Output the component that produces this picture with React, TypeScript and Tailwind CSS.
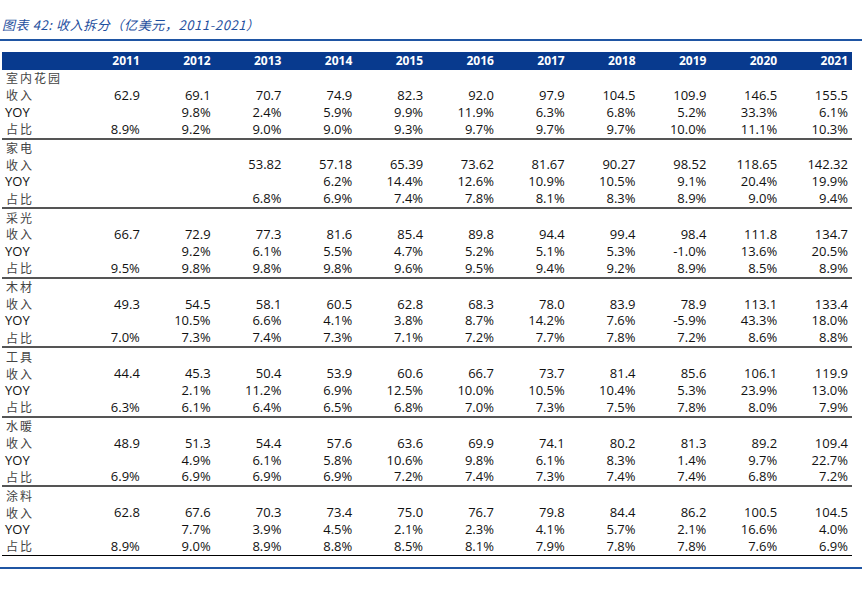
const years = ["2011", "2012", "2013", "2014", "2015", "2016", "2017", "2018", "2019", "2020", "2021"];

type Group = { name: string; rev: string[]; yoy: string[]; share: string[] };

const groups: Group[] = [
  {
    name: "室内花园",
    rev: ["62.9", "69.1", "70.7", "74.9", "82.3", "92.0", "97.9", "104.5", "109.9", "146.5", "155.5"],
    yoy: ["", "9.8%", "2.4%", "5.9%", "9.9%", "11.9%", "6.3%", "6.8%", "5.2%", "33.3%", "6.1%"],
    share: ["8.9%", "9.2%", "9.0%", "9.0%", "9.3%", "9.7%", "9.7%", "9.7%", "10.0%", "11.1%", "10.3%"],
  },
  {
    name: "家电",
    rev: ["", "", "53.82", "57.18", "65.39", "73.62", "81.67", "90.27", "98.52", "118.65", "142.32"],
    yoy: ["", "", "", "6.2%", "14.4%", "12.6%", "10.9%", "10.5%", "9.1%", "20.4%", "19.9%"],
    share: ["", "", "6.8%", "6.9%", "7.4%", "7.8%", "8.1%", "8.3%", "8.9%", "9.0%", "9.4%"],
  },
  {
    name: "采光",
    rev: ["66.7", "72.9", "77.3", "81.6", "85.4", "89.8", "94.4", "99.4", "98.4", "111.8", "134.7"],
    yoy: ["", "9.2%", "6.1%", "5.5%", "4.7%", "5.2%", "5.1%", "5.3%", "-1.0%", "13.6%", "20.5%"],
    share: ["9.5%", "9.8%", "9.8%", "9.8%", "9.6%", "9.5%", "9.4%", "9.2%", "8.9%", "8.5%", "8.9%"],
  },
  {
    name: "木材",
    rev: ["49.3", "54.5", "58.1", "60.5", "62.8", "68.3", "78.0", "83.9", "78.9", "113.1", "133.4"],
    yoy: ["", "10.5%", "6.6%", "4.1%", "3.8%", "8.7%", "14.2%", "7.6%", "-5.9%", "43.3%", "18.0%"],
    share: ["7.0%", "7.3%", "7.4%", "7.3%", "7.1%", "7.2%", "7.7%", "7.8%", "7.2%", "8.6%", "8.8%"],
  },
  {
    name: "工具",
    rev: ["44.4", "45.3", "50.4", "53.9", "60.6", "66.7", "73.7", "81.4", "85.6", "106.1", "119.9"],
    yoy: ["", "2.1%", "11.2%", "6.9%", "12.5%", "10.0%", "10.5%", "10.4%", "5.3%", "23.9%", "13.0%"],
    share: ["6.3%", "6.1%", "6.4%", "6.5%", "6.8%", "7.0%", "7.3%", "7.5%", "7.8%", "8.0%", "7.9%"],
  },
  {
    name: "水暖",
    rev: ["48.9", "51.3", "54.4", "57.6", "63.6", "69.9", "74.1", "80.2", "81.3", "89.2", "109.4"],
    yoy: ["", "4.9%", "6.1%", "5.8%", "10.6%", "9.8%", "6.1%", "8.3%", "1.4%", "9.7%", "22.7%"],
    share: ["6.9%", "6.9%", "6.9%", "6.9%", "7.2%", "7.4%", "7.3%", "7.4%", "7.4%", "6.8%", "7.2%"],
  },
  {
    name: "涂料",
    rev: ["62.8", "67.6", "70.3", "73.4", "75.0", "76.7", "79.8", "84.4", "86.2", "100.5", "104.5"],
    yoy: ["", "7.7%", "3.9%", "4.5%", "2.1%", "2.3%", "4.1%", "5.7%", "2.1%", "16.6%", "4.0%"],
    share: ["8.9%", "9.0%", "8.9%", "8.8%", "8.5%", "8.1%", "7.9%", "7.8%", "7.8%", "7.6%", "6.9%"],
  },
];

const cjk = "font-['Noto_Sans_CJK_SC',sans-serif]";
const num = "font-['Open_Sans','Liberation_Sans',sans-serif]";

function Row({ label, values, cn = true }: { label: string; values: string[]; cn?: boolean }) {
  return (
    <div className="grid grid-cols-[71px_repeat(11,minmax(0,1fr))] h-[16.9px] items-center">
      <div
        className={
          cn
            ? `${cjk} pl-[4px] text-[12px] tracking-[2px] text-[#444] leading-none`
            : `${num} pl-[3px] text-[13px] text-[#111] leading-none`
        }
      >
        {label}
      </div>
      {values.map((v, i) => (
        <div key={i} className={`${num} text-right pr-[4px] text-[13px] text-[#111] leading-none`}>
          {v}
        </div>
      ))}
    </div>
  );
}

export default function App() {
  return (
    <div className="w-[868px] h-[594px] bg-white overflow-hidden">
      {/* title */}
      <div className="pt-[16px] pl-[2px] h-[39px]">
        <div className={`${cjk} italic text-[13px] tracking-[0.6px] text-[#1f4f9e] leading-[18px]`}>
          图表 42: 收入拆分（亿美元，2011-2021）
        </div>
      </div>
      <div className="w-[862px] h-[2px] bg-[#1f55a3]" />

      <div className="ml-[2px] w-[850px] mt-[11px]">
        {/* header */}
        <div className="grid grid-cols-[71px_repeat(11,minmax(0,1fr))] h-[18px] items-center bg-[#083a8e]">
          <div />
          {years.map((y) => (
            <div key={y} className={`${num} text-right pr-[4px] text-[12px] font-bold text-white`}>
              {y}
            </div>
          ))}
        </div>

        {groups.map((g, gi) => (
          <div
            key={g.name}
            className={
              gi === groups.length - 1
                ? "border-b-[1.5px] border-black"
                : "border-b-[2px] border-[#555]"
            }
          >
            <Row label={g.name} values={years.map(() => "")} />
            <Row label="收入" values={g.rev} />
            <Row label="YOY" values={g.yoy} cn={false} />
            <Row label="占比" values={g.share} />
          </div>
        ))}
      </div>

      <div className="w-[862px] h-[2px] bg-[#1f55a3] mt-[11px]" />
    </div>
  );
}
